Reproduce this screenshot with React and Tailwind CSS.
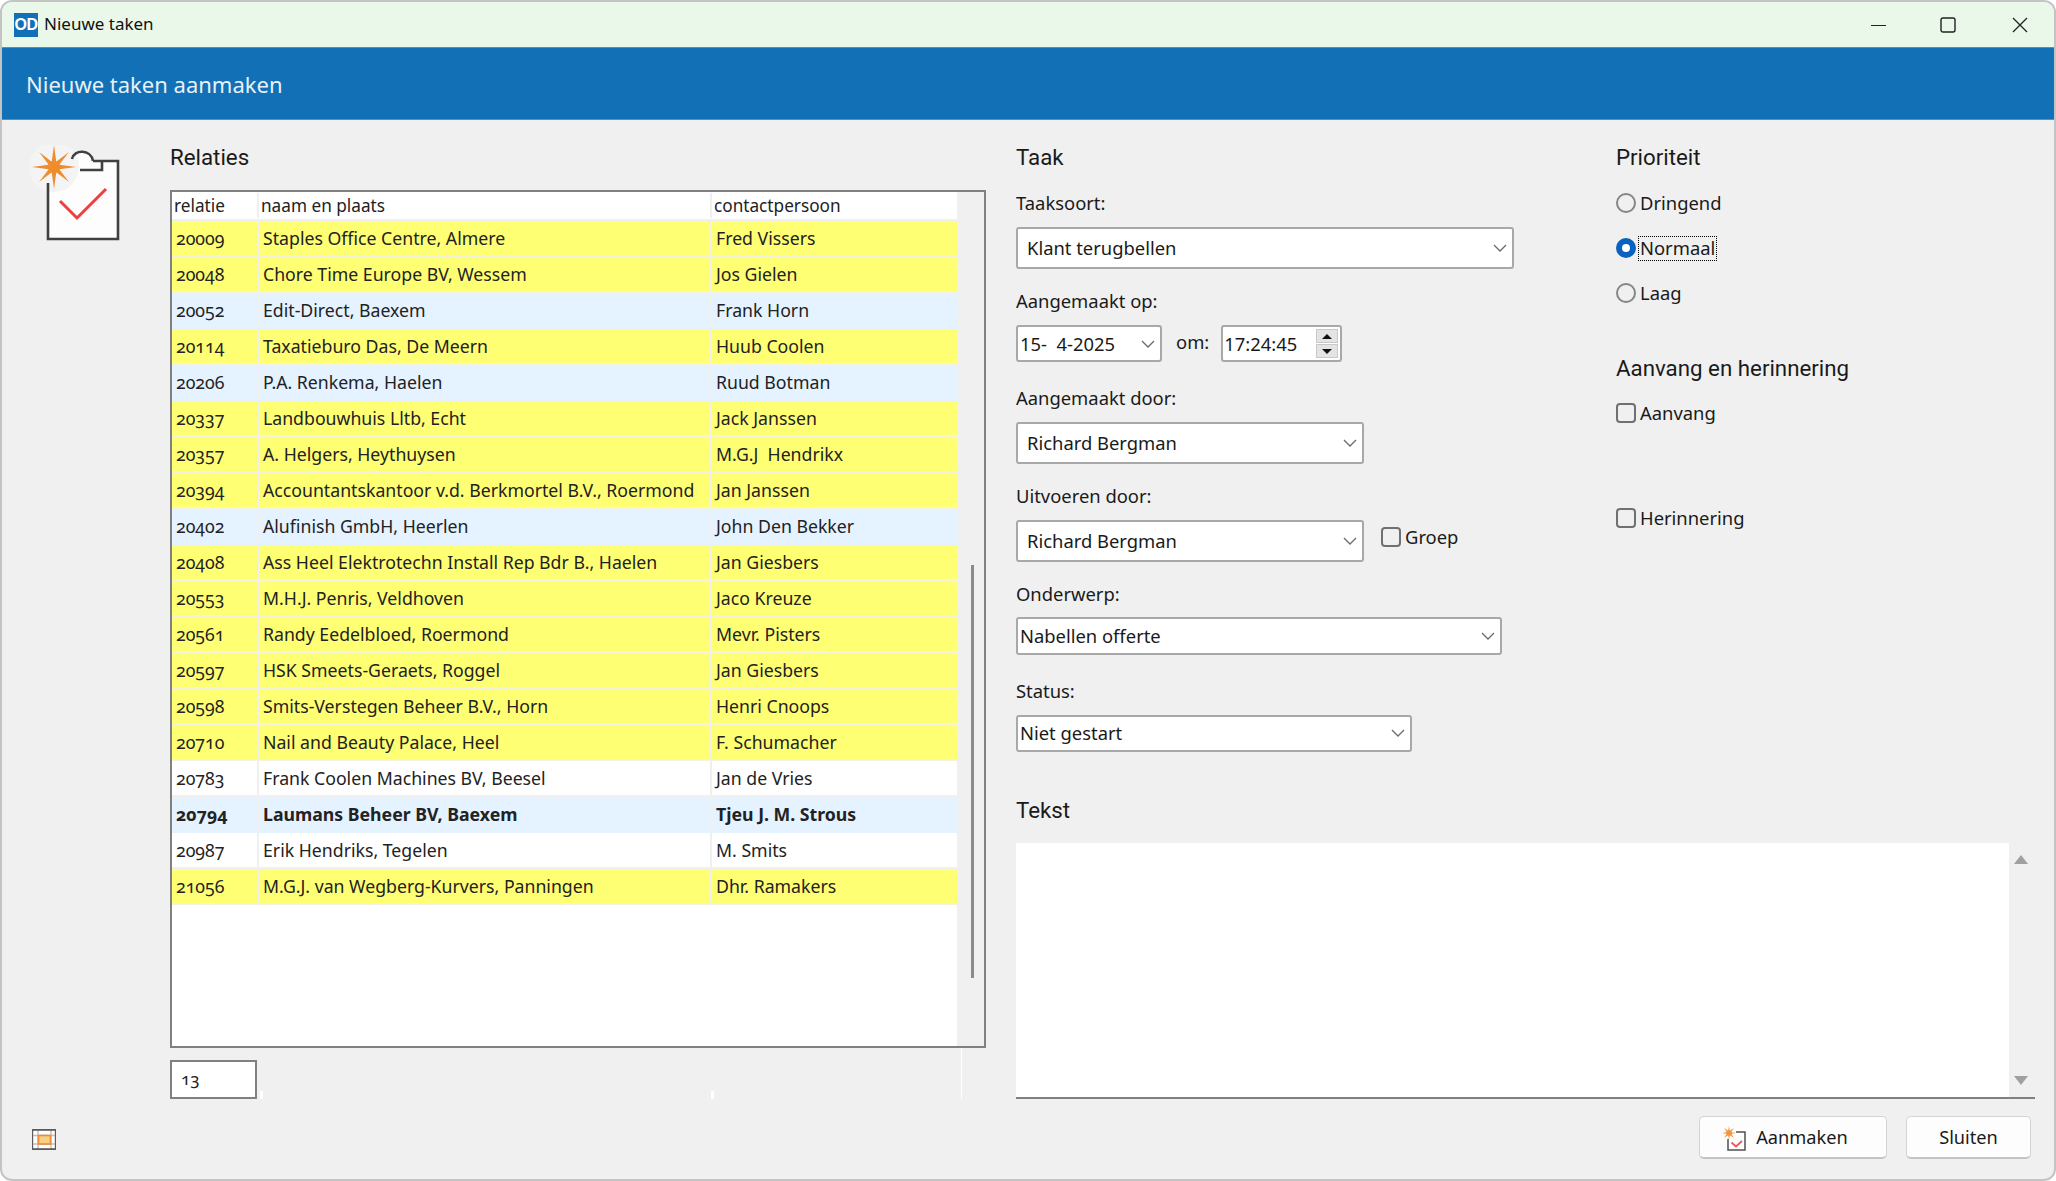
import React from 'react';

const rows = [
  ['20009', 'Staples Office Centre, Almere', 'Fred Vissers', 'y'],
  ['20048', 'Chore Time Europe BV, Wessem', 'Jos Gielen', 'y'],
  ['20052', 'Edit-Direct, Baexem', 'Frank Horn', 'b'],
  ['20114', 'Taxatieburo Das, De Meern', 'Huub Coolen', 'y'],
  ['20206', 'P.A. Renkema, Haelen', 'Ruud Botman', 'b'],
  ['20337', 'Landbouwhuis Lltb, Echt', 'Jack Janssen', 'y'],
  ['20357', 'A. Helgers, Heythuysen', 'M.G.J  Hendrikx', 'y'],
  ['20394', 'Accountantskantoor v.d. Berkmortel B.V., Roermond', 'Jan Janssen', 'y'],
  ['20402', 'Alufinish GmbH, Heerlen', 'John Den Bekker', 'b'],
  ['20408', 'Ass Heel Elektrotechn Install Rep Bdr B., Haelen', 'Jan Giesbers', 'y'],
  ['20553', 'M.H.J. Penris, Veldhoven', 'Jaco Kreuze', 'y'],
  ['20561', 'Randy Eedelbloed, Roermond', 'Mevr. Pisters', 'y'],
  ['20597', 'HSK Smeets-Geraets, Roggel', 'Jan Giesbers', 'y'],
  ['20598', 'Smits-Verstegen Beheer B.V., Horn', 'Henri Cnoops', 'y'],
  ['20710', 'Nail and Beauty Palace, Heel', 'F. Schumacher', 'y'],
  ['20783', 'Frank Coolen Machines BV, Beesel', 'Jan de Vries', 'w'],
  ['20794', 'Laumans Beheer BV, Baexem', 'Tjeu J. M. Strous', 's'],
  ['20987', 'Erik Hendriks, Tegelen', 'M. Smits', 'w'],
  ['21056', 'M.G.J. van Wegberg-Kurvers, Panningen', 'Dhr. Ramakers', 'y'],
];

const rowColors = {
  y: 'bg-[#ffff73] border-[#f3f3e0]',
  b: 'bg-[#e5f2ff] border-[#e5f2ff]',
  w: 'bg-white border-[#f0f0f0]',
  s: 'bg-[#e5f2ff] border-[#e5f2ff] font-bold',
};

const Chevron = ({ className }) => (
  <svg width="14" height="8" viewBox="0 0 14 8" className={className}>
    <path d="M1 1l6 6 6-6" fill="none" stroke="#6a6a6a" strokeWidth="1.3" />
  </svg>
);

const Combo = ({ text, className }) => (
  <div className={`flex items-center justify-between bg-white border-2 border-[#a8a8a8] rounded-[3px] pr-[5px] text-[18.4px] text-[#1a1a1a] ${className}`}>
    <span className="whitespace-pre">{text}</span>
    <Chevron />
  </div>
);

const Label = ({ children, className = '' }) => (
  <div className={`h-6 leading-6 text-[18.4px] text-[#1a1a1a] ${className}`}>{children}</div>
);

const Heading = ({ children, className = '' }) => (
  <div className={`h-[30px] leading-[30px] text-[22.3px] text-[#1a1a1a] font-['Roboto',sans-serif] ${className}`}>{children}</div>
);

const Radio = ({ label, checked }) => (
  <div className="flex items-center h-6 text-[18.4px] text-[#1a1a1a]">
    {checked ? (
      <span className="w-5 h-5 rounded-full border-[6px] border-[#0a62c0] bg-white" />
    ) : (
      <span className="w-5 h-5 rounded-full border-2 border-[#858585]" />
    )}
    {checked ? (
      <span className="ml-[2px] h-[25px] leading-[22px] px-px border border-dotted border-black">{label}</span>
    ) : (
      <span className="ml-1">{label}</span>
    )}
  </div>
);

const Check = ({ label, className = '' }) => (
  <div className={`flex items-center h-6 text-[18.4px] text-[#1a1a1a] ${className}`}>
    <span className="w-5 h-5 rounded-[4px] border-2 border-[#707070]" />
    <span className="ml-1">{label}</span>
  </div>
);

const TaskIcon = () => (
  <svg width="100" height="100" viewBox="28 145 100 100">
    <path d="M48 182V239H118V161H94C92 149 74 149 72 160L60 185Z" fill="#fdfdfd" />
    <circle cx="54" cy="167" r="25" fill="#f4f4f4" />
    <path d="M48 183V239H118V161H93M93 161C91 149 74 149 72 159M102 161V170H80" fill="none" stroke="#404040" strokeWidth="2.6" />
    <path d="M60 201L77 218L106 189" fill="none" stroke="#ee3f3f" strokeWidth="3" />
    <path d="M54 145L57 167L54 189L51 167ZM32 167L54 164L76 167L54 170ZM39 152L56 165L69 182L52 169ZM69 152L56 169L39 182L52 165Z" fill="#ef8c2c" />
    <circle cx="54" cy="167" r="6" fill="#ef8c2c" />
  </svg>
);

const SmallTaskIcon = () => (
  <svg width="24" height="26" viewBox="0 0 24 26">
    <path d="M6 14V25H23V7H14" fill="#fdfdfd" stroke="#505050" strokeWidth="1.5" />
    <path d="M9.5 17.5L14 21.5L20 16" fill="none" stroke="#ee5560" strokeWidth="1.8" />
    <path d="M7 1L8.2 8L7 15L5.8 8ZM0 8L7 6.8L14 8L7 9.2ZM2 3L8 7L12 13L6 9ZM12 3L8 9L2 13L6 7Z" fill="#f2953a" />
    <circle cx="7" cy="8" r="2.5" fill="#f2953a" />
  </svg>
);

const GridIcon = () => (
  <svg width="24" height="21" viewBox="0 0 24 21">
    <rect x="0.5" y="0.5" width="23" height="20" fill="#fff" stroke="#5c5c5c" strokeWidth="1.4" />
    <path d="M1 6.5H23M1 15H23M6 1V20M19 1V20" stroke="#bdbdbd" strokeWidth="1.4" />
    <path d="M0 1H24M0 20H24" stroke="#5c5c5c" strokeWidth="1.6" />
    <rect x="6.5" y="6.5" width="12" height="8.5" fill="#f6d183" stroke="#ee8a3c" strokeWidth="1.6" />
  </svg>
);

export default function App() {
  return (
    <div className="w-[2056px] h-[1181px] bg-white">
      <div className="w-full h-full flex flex-col border-2 border-[#c4c4c4] rounded-[12px] overflow-hidden bg-[#f0f0f0] font-['Noto_Sans',sans-serif]">
        {/* title bar */}
        <div className="h-[45px] shrink-0 flex items-center bg-[#e9f8e9] pl-3">
          <div className="w-6 h-6 bg-[#1270b6] text-white text-[16px] font-bold flex items-center justify-center tracking-[-0.5px] font-['Liberation_Sans',sans-serif]">OD</div>
          <div className="ml-[6px] mb-[2px] text-[17px] text-[#111]">Nieuwe taken</div>
          <div className="ml-auto flex items-center">
            <svg width="16" height="16" viewBox="0 0 16 16" className="mr-[53px]">
              <path d="M0 8.5H15" stroke="#222" strokeWidth="1.2" />
            </svg>
            <svg width="16" height="16" viewBox="0 0 16 16" className="mr-[56px]">
              <rect x="1" y="1" width="14" height="14" rx="2" fill="none" stroke="#222" strokeWidth="1.4" />
            </svg>
            <svg width="16" height="16" viewBox="0 0 16 16" className="mr-[26px]">
              <path d="M1 1L15 15M15 1L1 15" stroke="#222" strokeWidth="1.3" />
            </svg>
          </div>
        </div>

        {/* blue header */}
        <div className="h-[73px] shrink-0 flex items-center bg-[#1270b6] border-y border-[#4a92c8] pl-[24px] pt-[2px] text-[22px] text-[#e8f1f8]">
          Nieuwe taken aanmaken
        </div>

        {/* content */}
        <div className="h-[979px] shrink-0 flex">
          <div className="w-[168px] shrink-0 pl-[26px] pt-[25px]">
            <TaskIcon />
          </div>

          <div className="w-[816px] shrink-0 flex flex-col pt-[22px]">
            <Heading>Relaties</Heading>
            <div className="mt-[18px] h-[858px] flex border-2 border-[#808080] bg-white text-[#222] text-[17.7px]">
              <div className="w-[785px] shrink-0 oldstyle-nums">
                <div className="h-[29px] flex items-center border-b-2 border-[#f0f0f0] text-[17.2px]">
                  <div className="w-[85px] pl-[2px]">relatie</div>
                  <div className="w-[453px] pl-[2px] border-l-2 border-[#f0f0f0]">naam en plaats</div>
                  <div className="w-[247px] pl-[2px] border-l-2 border-[#f0f0f0]">contactpersoon</div>
                </div>
                {rows.map((r) => (
                  <div key={r[0]} className={`h-9 flex items-center border-b-2 whitespace-pre ${rowColors[r[3]]}`}>
                    <div className="w-[85px] pl-[4px]">{r[0]}</div>
                    <div className="w-[453px] h-full flex items-center pl-[4px] border-l-2 border-[#f0f0f0]">{r[1]}</div>
                    <div className="w-[247px] h-full flex items-center pl-[4px] border-l-2 border-[#f0f0f0]">{r[2]}</div>
                  </div>
                ))}
              </div>
              <div className="flex-1 bg-[#f0f0f0] pt-[373px] pl-[14px]">
                <div className="w-[3px] h-[413px] bg-[#8a8a8a]" />
              </div>
            </div>
            <div className="mt-3 h-[39px] flex items-end">
              <div className="w-[87px] h-[39px] bg-white border-2 border-[#808080] pl-[9px] leading-[34px] text-[17px] text-[#222] oldstyle-nums">13</div>
              <div className="ml-[3px] w-[3px] h-2 bg-white" />
              <div className="w-[3px] h-2 bg-white ml-[448px]" />
              <div className="w-px h-[51px] bg-white ml-[247px]" />
            </div>
          </div>

          <div className="ml-[30px] w-[1019px] shrink-0 flex flex-col pt-[22px]">
            <div className="flex">
              <div className="w-[600px] shrink-0">
                <Heading>Taak</Heading>
                <Label className="mt-[19px]">Taaksoort:</Label>
                <Combo text="Klant terugbellen" className="mt-3 w-[498px] h-[42px] pl-[9px]" />
                <Label className="mt-5">Aangemaakt op:</Label>
                <div className="mt-3 flex items-center">
                  <Combo text="15-  4-2025" className="w-[146px] h-[37px] pl-[2px] pt-px" />
                  <div className="ml-[14px] mb-[4px] text-[18.4px] text-[#1a1a1a]">om:</div>
                  <div className="ml-[12px] w-[121px] h-[37px] flex items-center justify-between bg-white border-2 border-[#a8a8a8] rounded-[3px] pl-[1px] pr-[2px] text-[18.4px] text-[#1a1a1a]">
                    <span className="pt-px">17:24:45</span>
                    <div className="flex flex-col gap-[1px]">
                      <div className="w-[22px] h-[14px] bg-[#e4e4e4] border border-[#c8c8c8] flex items-center justify-center">
                        <div className="w-0 h-0 border-x-[5px] border-x-transparent border-b-[5px] border-b-[#111]" />
                      </div>
                      <div className="w-[22px] h-[14px] bg-[#e4e4e4] border border-[#c8c8c8] flex items-center justify-center">
                        <div className="w-0 h-0 border-x-[5px] border-x-transparent border-t-[5px] border-t-[#111]" />
                      </div>
                    </div>
                  </div>
                </div>
                <Label className="mt-6">Aangemaakt door:</Label>
                <Combo text="Richard Bergman" className="mt-3 w-[348px] h-[42px] pl-[9px]" />
                <Label className="mt-5">Uitvoeren door:</Label>
                <div className="mt-3 flex items-center">
                  <Combo text="Richard Bergman" className="w-[348px] h-[42px] pl-[9px]" />
                  <Check label="Groep" className="ml-[17px] mb-[9px]" />
                </div>
                <Label className="mt-5">Onderwerp:</Label>
                <Combo text="Nabellen offerte" className="mt-[11px] w-[486px] h-[38px] pl-[2px]" />
                <Label className="mt-6">Status:</Label>
                <Combo text="Niet gestart" className="mt-3 w-[396px] h-[37px] pl-[2px] pb-px" />
              </div>
              <div className="flex-1">
                <Heading>Prioriteit</Heading>
                <div className="mt-[19px] flex flex-col gap-[21px]">
                  <Radio label="Dringend" />
                  <Radio label="Normaal" checked />
                  <Radio label="Laag" />
                </div>
                <Heading className="mt-[48px]">Aanvang en herinnering</Heading>
                <Check label="Aanvang" className="mt-[18px]" />
                <Check label="Herinnering" className="mt-[81px]" />
              </div>
            </div>
            <Heading className="mt-[43px]">Tekst</Heading>
            <div className="mt-[18px] flex-1 flex bg-white border-b-2 border-[#808080]">
              <div className="flex-1" />
              <div className="w-[26px] bg-[#f0f0f0] flex flex-col items-center justify-between pt-3 pb-3 pr-[2px]">
                <div className="w-0 h-0 border-x-[7px] border-x-transparent border-b-[9px] border-b-[#a0a0a0]" />
                <div className="w-0 h-0 border-x-[7px] border-x-transparent border-t-[9px] border-t-[#a0a0a0]" />
              </div>
            </div>
          </div>
        </div>

        {/* footer */}
        <div className="flex-1 flex items-start pt-[17px] pl-[30px] pr-[23px]">
          <div className="mt-[13px]"><GridIcon /></div>
          <button className="ml-auto w-[188px] h-[43px] flex items-center justify-center gap-[10px] pr-[16px] pt-px bg-[#fdfdfd] border border-[#d4d4d4] border-b-2 border-b-[#c4c4c4] rounded-[5px] text-[18.2px] text-[#1a1a1a]">
            <SmallTaskIcon />
            Aanmaken
          </button>
          <button className="ml-[19px] w-[125px] h-[43px] pt-px bg-[#fdfdfd] border border-[#d4d4d4] border-b-2 border-b-[#c4c4c4] rounded-[5px] text-[18.2px] text-[#1a1a1a]">
            Sluiten
          </button>
        </div>
      </div>
    </div>
  );
}
